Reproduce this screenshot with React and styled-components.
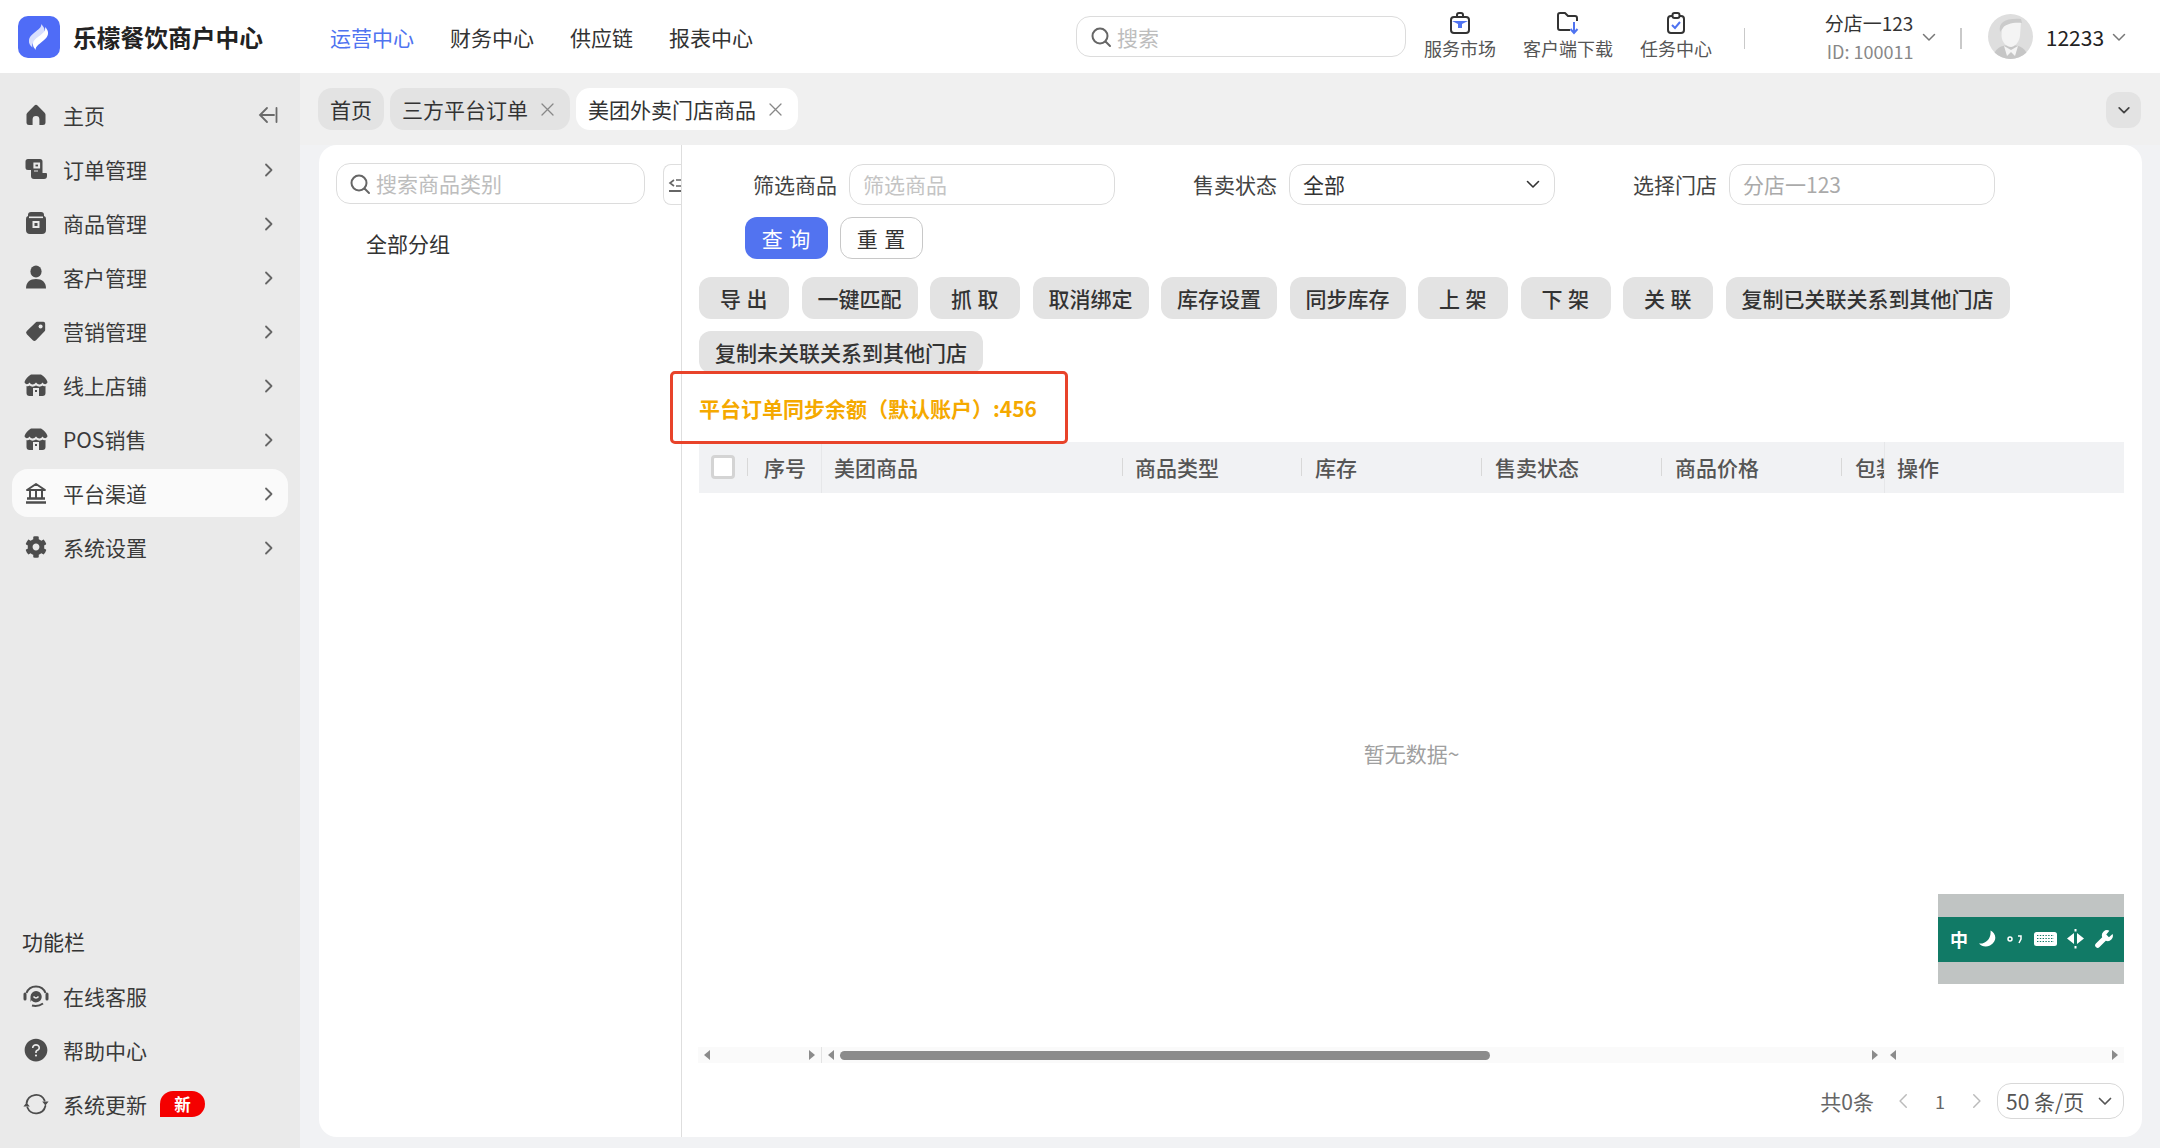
import React from "react";
import styled, { createGlobalStyle } from "styled-components";
import { FaCog } from "react-icons/fa";
import { AiFillQuestionCircle } from "react-icons/ai";

const Global = createGlobalStyle`
  html, body { margin: 0; padding: 0; background: #fff; }
  * { box-sizing: border-box; }
  body { font-family: "Noto Sans CJK SC", "Noto Sans", sans-serif; font-size: 21px; color: #333; }
`;

const Page = styled.div`
  width: 2160px; height: 1148px; overflow: hidden;
  display: grid; grid-template-rows: 73px 1fr; grid-template-columns: 300px 1fr;
`;

const Header = styled.header`
  grid-column: 1 / 3; display: flex; align-items: center; padding-left: 18px; background: #fff;
`;
const Title = styled.div`
  margin-left: 13px; width: 190px; font-size: 23.75px; font-weight: 700; color: #222; white-space: nowrap; line-height: 1;
`;
const Nav = styled.nav`display: flex; gap: 36px; margin-left: 67px;`;
const NavItem = styled.a`font-size: 21px; color: ${p => (p.$active ? "#4f73f0" : "#333")}; white-space: nowrap;`;
const Search = styled.div`
  display: flex; align-items: center; gap: 5px; height: 41px; width: ${p => p.$w}px;
  margin-left: ${p => p.$ml || 0}px; padding: 0 0 ${p => p.$pb || 0}px ${p => p.$pl || 13}px;
  border: 1.4px solid #dcdcdc; border-radius: 14px; background: #fff; color: #bdbdbd; font-size: 21px; flex-shrink: 0;
  svg { margin-top: ${p => p.$pb || 0}px; }
`;
const Tools = styled.div`display: flex; margin-top: -3px;`;
const Tool = styled.div`
  width: 108px; display: flex; flex-direction: column; align-items: center; gap: 2px;
  font-size: 18px; line-height: 22px; color: #555; white-space: nowrap;
`;
const VLine = styled.div`width: 1.4px; height: 21px; background: #c9c9c9; margin-left: ${p => p.$ml}px; margin-top: 3px;`;
const StoreInfo = styled.div`
  margin-left: ${p => p.$ml}px; width: 90px; display: flex; flex-direction: column; align-items: flex-end;
  font-size: 19px; line-height: 26px; color: #333; white-space: nowrap; gap: 2px;
`;
const StoreId = styled.span`font-size: 18px; color: #888;`;
const HeadChevron = styled.div`display: flex; margin-left: ${p => p.$ml}px; color: #777;`;
const Avatar = styled.div`width: 45px; height: 45px; border-radius: 50%; margin-left: 26px; overflow: hidden; flex-shrink: 0;`;
const UserName = styled.span`margin-left: 13px; font-size: 21px; color: #222;`;

const Sidebar = styled.aside`
  background: #eaeaea; display: flex; flex-direction: column; padding: 18px 12px 20px;
`;
const SideGroup = styled.div`display: flex; flex-direction: column; gap: ${p => p.$gap}px;`;
const SideBottom = styled(SideGroup)`margin-top: auto;`;
const SideLabel = styled.div`margin: 0 0 10px 10px; height: 30px; line-height: 30px; font-size: 21px; color: #333;`;
const SideItem = styled.div`
  display: flex; align-items: center; height: 48px; padding: 0 12px; gap: 15px; border-radius: 16px;
  background: ${p => (p.$active ? "#fafafa" : "transparent")}; color: #3a3a3a; font-size: 21px; white-space: nowrap;
`;
const SideIcon = styled.span`
  width: 24px; height: 24px; display: flex; align-items: center; justify-content: center; color: #4d4d4d; flex-shrink: 0;
  svg { flex-shrink: 0; }
`;
const SideEnd = styled.span`
  margin-left: auto; margin-right: ${p => (p.$dock ? -2 : 0)}px; margin-top: ${p => (p.$dock ? 0 : 2)}px; display: flex; color: #666;
`;
const NewBadge = styled.span`
  display: flex; align-items: center; justify-content: center; margin-left: -2px; width: 45px; height: 26px;
  background: #f50000; color: #fff; font-size: 16.5px; font-weight: 700; border-radius: 14px 14px 14px 0;
`;

const Main = styled.main`display: flex; flex-direction: column; background: #f1f2f4; min-height: 0;`;
const TabBar = styled.div`
  height: 72px; background: #f0f0f0; display: flex; gap: 6px; padding: 15px 19px 0 18px; align-items: flex-start;
`;
const Tab = styled.div`
  height: 42px; display: flex; align-items: center; gap: 13px; padding: 0 ${p => (p.$closable ? 16 : 12)}px 0 12px;
  border-radius: 14px; background: ${p => (p.$active ? "#fff" : "#e3e3e3")};
  font-size: 21px; color: #333; white-space: nowrap;
`;
const TabClose = styled.span`display: flex; color: #888;`;
const TabToggle = styled.div`
  margin: 4px 0 0 auto; width: 35px; height: 36px; border-radius: 12px; background: #e3e3e3;
  display: flex; align-items: center; justify-content: center; color: #444;
`;
const PanelWrap = styled.div`flex: 1; min-height: 0; padding: 0 18px 11px 19px; display: flex;`;
const Panel = styled.div`flex: 1; min-width: 0; display: flex; background: #fff; border-radius: 18px; overflow: hidden;`;
const LeftCol = styled.div`
  position: relative; width: 363px; flex-shrink: 0; border-right: 1.4px solid #dedede; padding: 18px 0 0 17px;
`;
const GroupName = styled.div`margin: 24px 0 0 30px; height: 30px; line-height: 30px; font-size: 21px; color: #333;`;
const CollapseTab = styled.div`
  position: absolute; right: 0; top: 19px; width: 18px; height: 41px; background: #fff;
  border: 1.4px solid #dedede; border-right: none; border-radius: 8px 0 0 8px;
  display: flex; align-items: center; justify-content: flex-end; color: #666;
`;
const RightCol = styled.div`flex: 1; min-width: 0; display: flex; flex-direction: column; padding: 19px 18px 0 17px;`;
const FilterRow = styled.div`display: flex; align-items: center; padding-left: 54px; height: 41px;`;
const FilterLabel = styled.label`margin: 0 12px 0 ${p => p.$ml || 0}px; padding-bottom: 2px; color: #444; font-size: 21px; white-space: nowrap;`;
const Field = styled.div`
  width: 266px; flex-shrink: 0; height: 41px; border: 1.4px solid #dcdcdc; border-radius: 14px; padding: 0 13px 2px;
  display: flex; align-items: center; justify-content: space-between;
  color: ${p => p.$color || "#c4c4c4"}; font-size: 21px; white-space: nowrap;
`;
const QueryRow = styled.div`display: flex; gap: 12px; margin: 12px 0 0 46px;`;
const QueryBtn = styled.button`
  width: 83px; height: 42px; border-radius: 12px; font: inherit; cursor: pointer; padding: 0;
  background: ${p => (p.$primary ? "#5273f0" : "#fff")}; color: ${p => (p.$primary ? "#fff" : "#333")};
  border: ${p => (p.$primary ? "none" : "1.4px solid #c8c8c8")}; letter-spacing: 1px;
`;
const ActionRow = styled.div`display: flex; flex-wrap: wrap; gap: 12px 12.5px; margin-top: 18px;`;
const ActionBtn = styled.button`
  height: 42px; padding: 0 16px; min-width: 90px; border: none; border-radius: 12px; background: #e3e3e3;
  font: inherit; font-weight: 500; color: #333; letter-spacing: ${p => (p.$wide ? 0 : "0.5px")}; white-space: nowrap; cursor: pointer;
`;
const Balance = styled.div`
  position: relative; height: 69px; padding-top: 1px; display: flex; align-items: center;
  color: #f5a900; font-size: 21px; font-weight: 600; white-space: nowrap;
`;
const Callout = styled.div`
  position: absolute; left: -29px; top: -2px; width: 398px; height: 73px; border: 3px solid #e8432a; border-radius: 5px;
`;
const TableHead = styled.div`display: flex; height: 51px; background: #f1f2f4; flex-shrink: 0;`;
const HeadCell = styled.div`
  display: flex; align-items: center; width: ${p => p.$w}px; flex-shrink: 0; overflow: hidden;
  border-right: ${p => (p.$edge ? "1px solid #e6e7e9" : "none")}; border-left: ${p => (p.$fixed ? "1px solid #e6e7e9" : "none")};
  font-weight: 500; color: #555; font-size: 21px; white-space: nowrap; padding-bottom: 1px;
`;
const HeadSep = styled.span`width: 1px; height: 18px; background: #d8d8d8; flex-shrink: 0;`;
const HeadLabel = styled.span`margin-left: ${p => p.$ml}px;`;
const Check = styled.span`width: 24px; height: 24px; margin-left: 12px; border: 3px solid #d4d4d4; border-radius: 4px; background: #fff;`;
const TableBody = styled.div`
  flex: 1; min-height: 0; display: flex; align-items: center; justify-content: center; padding-bottom: 34px;
  color: #a0a0a0; font-size: 21px;
`;
const ScrollRow = styled.div`display: flex; height: 16px; background: #fafafa; margin-left: -1px; flex-shrink: 0;`;
const ScrollSeg = styled.div`
  display: flex; align-items: center; width: ${p => p.$w}px; flex-shrink: 0; padding: 0 6px;
  border-right: ${p => (p.$edge ? "1px solid #e3e3e3" : "none")};
`;
const ArrowL = styled.span`width: 0; height: 0; border: 5px solid transparent; border-left-width: 0; border-right: 6px solid #8b8b8b;`;
const ArrowR = styled.span`width: 0; height: 0; margin-left: auto; border: 5px solid transparent; border-right-width: 0; border-left: 6px solid #8b8b8b;`;
const Thumb = styled.span`margin-left: 6px; width: 650px; height: 9px; border-radius: 5px; background: #8b8b8b;`;
const Pager = styled.div`
  height: 74px; padding-top: 20px; display: flex; justify-content: flex-end; align-items: flex-start; flex-shrink: 0;
  color: #666; font-size: 21px;
`;
const PageText = styled.span`line-height: 36px; white-space: nowrap;`;
const PageBtn = styled.span`
  width: 36px; height: 36px; display: flex; align-items: center; justify-content: center; font-size: 18px;
  color: ${p => p.$muted ? "#bbb" : "#666"}; margin-left: ${p => p.$ml || 0}px;
`;
const PageSize = styled.div`
  width: 127px; height: 36px; margin-left: 3px; padding: 0 10px 0 8px; border: 1.4px solid #d8d8d8; border-radius: 14px;
  display: flex; align-items: center; justify-content: space-between; color: #555; white-space: nowrap;
`;
const ImeOverlay = styled.div`
  position: absolute; left: 1938px; top: 894px; width: 186px; height: 90px; background: #c0c4c3;
  display: flex; align-items: center;
`;
const ImeBar = styled.div`
  width: 100%; height: 45px; background: #117a66; color: #fff; display: flex; align-items: center;
  gap: 10.5px; padding-left: 12px; font-size: 18px; font-weight: 700;
  svg { flex-shrink: 0; }
`;

const Chevron = ({ size = 16, dir = "right", w = 1.8 }) => {
  const d = { right: "M6 2.5 L11.5 8 L6 13.5", down: "M2.5 5.5 L8 11 L13.5 5.5", left: "M10 2.5 L4.5 8 L10 13.5" }[dir];
  return <svg width={size} height={size} viewBox="0 0 16 16" fill="none" stroke="currentColor" strokeWidth={w} strokeLinecap="round" strokeLinejoin="round"><path d={d} /></svg>;
};
const Mag = ({ size = 22 }) => (
  <svg width={size} height={size} viewBox="0 0 22 22" fill="none" stroke="#666" strokeWidth="2" strokeLinecap="round"><circle cx="10" cy="10" r="7.5" /><path d="M15.5 15.5 L20 20" /></svg>
);
const CloseX = () => (
  <svg width="13" height="13" viewBox="0 0 13 13" stroke="currentColor" strokeWidth="1.3" strokeLinecap="round"><path d="M1 1 L12 12 M12 1 L1 12" /></svg>
);
const Logo = () => (
  <svg width="42" height="42" viewBox="0 0 42 42" style={{ flexShrink: 0 }}>
    <rect width="42" height="42" rx="10" fill="#4f6cf7" />
    <path d="M23 8 C25 13 12 17 11 24 C10.5 27 12 29.5 14.5 31.5 C12.5 24 25 21.5 26.5 15 C27 12 25 10 23 8Z" fill="#fff" opacity=".78" />
    <path d="M18 34 C16 29 29 25 30 18 C30.5 15 29 13 27 11 C29 18 16 21 15 27 C14.5 30 16 32 18 34Z" fill="#fff" />
  </svg>
);
const BagTool = () => (
  <svg width="24" height="24" viewBox="0 0 24 24" fill="none">
    <rect x="3" y="6" width="18" height="16" rx="3" stroke="#333" strokeWidth="2" />
    <path d="M9 6 V4 a2 2 0 0 1 2-2 h2 a2 2 0 0 1 2 2 V6" stroke="#333" strokeWidth="2" />
    <path d="M4 10 H20 L14 13 V17 H10 V13Z" fill="#4f73f0" />
  </svg>
);
const FolderTool = () => (
  <svg width="24" height="24" viewBox="0 0 24 24" fill="none">
    <path d="M14 19 H4 a2 2 0 0 1-2-2 V4 a2 2 0 0 1 2-2 h5 l3 3 h7 a2 2 0 0 1 2 2 v3" stroke="#333" strokeWidth="2" strokeLinejoin="round" />
    <path d="M18 11 V21 M14.5 18 L18 22 L21.5 18" stroke="#4f73f0" strokeWidth="2" />
  </svg>
);
const ClipTool = () => (
  <svg width="24" height="24" viewBox="0 0 24 24" fill="none">
    <rect x="4" y="5" width="16" height="17" rx="3" stroke="#333" strokeWidth="2" />
    <rect x="8.5" y="2" width="7" height="5" rx="2" fill="#fff" stroke="#333" strokeWidth="2" />
    <path d="M8 14 L11 17 L16 11" stroke="#4f73f0" strokeWidth="2" />
  </svg>
);
const AvatarImg = () => (
  <svg width="45" height="45" viewBox="0 0 45 45">
    <rect width="45" height="45" fill="#dedede" />
    <path d="M5 45 C6 34 13 31 22.5 31 C32 31 39 34 40 45Z" fill="#c6c6c6" />
    <path d="M14 11 C15 6 31 5 33 8 L32 22 C31 29 26 33 23 33 C19 33 14 29 13.5 22Z" fill="#f4f4f4" />
    <path d="M12 18 C10 8 18 4 33 5 L34 9 C26 8 17 10 15 14Z" fill="#cbcbcb" />
    <path d="M16 32 L23 36 L30 32 L27 42 L23 38 L19 42Z" fill="#f4f4f4" />
  </svg>
);

const HomeI = () => <svg width="20" height="22" viewBox="0 0 20 22" fill="currentColor"><path d="M10 .8 C9.4 .8 9 1.1 8.5 1.6 L1.6 8.5 C.7 9.4.5 10 .5 11 V18.5 C.5 20.2 1.6 21 3 21 H6.6 V15.5 A3.4 3.4 0 0 1 13.4 15.5 V21 H17 C18.4 21 19.5 20.2 19.5 18.5 V11 C19.5 10 19.3 9.4 18.4 8.5 L11.5 1.6 C11 1.1 10.6 .8 10 .8Z" /></svg>;
const OrderI = () => <svg width="24" height="24" viewBox="0 0 24 24" fill="currentColor"><path d="M4 2 H16 a2.5 2.5 0 0 1 2.5 2.5 V16 H22 a1 1 0 0 1 1 1 V19 a3 3 0 0 1-3 3 H10 a3 3 0 0 1-3-3 V13 H4 a2.5 2.5 0 0 1-2.5-2.5 V4.5 A2.5 2.5 0 0 1 4 2Z" /><path d="M10 6 H15.5 V11 H10Z M10 14 H14" fill="#eaeaea" stroke="#eaeaea" strokeWidth="1.2" /><path d="M11.5 7.6 H14 V9.4 H11.5Z" /></svg>;
const BagI = () => <svg width="22" height="24" viewBox="0 0 22 24" fill="currentColor"><path d="M6 1 H16 a3 3 0 0 1 3 3 V5 a3 3 0 0 1 2 3 V19 a4 4 0 0 1-4 4 H5 a4 4 0 0 1-4-4 V8 a3 3 0 0 1 2-3 V4 a3 3 0 0 1 3-3Z" /><rect x="4" y="5.5" width="14" height="1.6" fill="#eaeaea" /><rect x="7.5" y="10" width="7" height="7" fill="#eaeaea" /><rect x="9.5" y="12" width="3" height="3" /></svg>;
const PersonI = () => <svg width="22" height="24" viewBox="0 0 22 24" fill="currentColor"><ellipse cx="11" cy="6.5" rx="5.6" ry="6" /><path d="M1 23.5 C1 17 5 14 11 14 C17 14 21 17 21 23.5Z" /></svg>;
const TagI = () => <svg width="22" height="22" viewBox="0 0 24 24" fill="currentColor"><path d="M13 2 H20 a2 2 0 0 1 2 2 V11 a2 2 0 0 1-.6 1.4 L12 22 a2.5 2.5 0 0 1-3.5 0 L2 15.5 a2.5 2.5 0 0 1 0-3.5 L11.6 2.6 A2 2 0 0 1 13 2Z" /><circle cx="17" cy="7" r="2.2" fill="#eaeaea" /></svg>;
const StoreI = () => <svg width="24" height="24" viewBox="0 0 24 24" fill="currentColor"><path d="M7 1.5 H17 C20 3 22.5 6 23.5 9 C23 11.5 20 12 18.5 9.5 C17 12 14 12 12 9.5 C10 12 7 12 5.5 9.5 C4 12 1 11.5 .5 9 C1.5 6 4 3 7 1.5Z" /><path d="M2.5 13 C4 13.5 5 13 5.5 12.5 C7 14 10 14 12 12.5 C14 14 17 14 18.5 12.5 C19 13 20 13.5 21.5 13 V20 a3 3 0 0 1-3 3 H5.5 a3 3 0 0 1-3-3Z" /><rect x="9" y="15" width="6" height="8" fill="#eaeaea" /><rect x="11" y="17" width="2" height="2" /></svg>;
const BankI = () => <svg width="22" height="22" viewBox="0 0 22 22" fill="none" stroke="currentColor" strokeWidth="2"><path d="M2 8 L11 2 L20 8Z" strokeLinejoin="round" /><path d="M5 8 V16 M11 8 V16 M17 8 V16" /><path d="M2 16.5 H20 M1 20.5 H21" strokeWidth="2.4" /></svg>;
const SupportI = () => <svg width="26" height="24" viewBox="0 0 26 24" fill="none" stroke="currentColor" strokeWidth="2"><path d="M3.5 9 A10.2 10.2 0 0 1 22.5 9" /><path d="M2 10 v5 M24 10 v5" strokeWidth="3" strokeLinecap="round" /><path d="M13 7 a5.7 5.7 0 1 1-4.5 9.2 L7.5 18 V12.5 A5.7 5.7 0 0 1 13 7Z" fill="currentColor" stroke="none" /><path d="M10.5 12.5 Q13 15.5 15.5 12.5" stroke="#eaeaea" strokeWidth="1.6" /><path d="M9 21.5 Q15 23 20 19.5" /></svg>;
const SyncI = () => <svg width="26" height="24" viewBox="0 0 26 24" fill="none" stroke="currentColor" strokeWidth="1.8" strokeLinecap="round"><path d="M3.6 11 A9.5 9.5 0 0 1 21.6 8.5" /><path d="M22.4 14 A9.5 9.5 0 0 1 4.4 15.5" /><path d="M19.2 9.5 H25.6 L22.4 13.5Z M.4 14.5 H6.8 L3.6 10.5Z" fill="currentColor" stroke="none" /></svg>;
const DockBack = () => <svg width="20" height="18" viewBox="0 0 20 18" fill="none" stroke="#6a6a6a" strokeWidth="1.8" strokeLinecap="round"><path d="M9 2 L2 9 L9 16 M2 9 H16 M18.5 2 V16" /></svg>;
const OutdentI = () => <svg width="13" height="16" viewBox="0 0 13 16" fill="none" stroke="currentColor" strokeWidth="1.6"><path d="M6 3 L2 6 L6 9 M8 3 H13 M8 9 H13" /><path d="M1 14 H13" strokeWidth="2" /></svg>;
const MoonI = () => <svg width="18" height="18" viewBox="0 0 18 18" fill="#fff"><path d="M11.5 .5 C17 3 19 11 11 15.5 C7 17.5 2.5 16.5 0 13.5 C6 14.5 12.5 9 11.5 .5Z" /></svg>;
const DotComma = () => <svg width="16" height="14" viewBox="0 0 16 14" fill="none" stroke="#fff" strokeWidth="1.5"><circle cx="3" cy="7" r="2" /><path d="M11 4 h3 v3 l-2 4" /></svg>;
const KeyboardI = () => <svg width="23" height="14" viewBox="0 0 23 14" fill="#fff"><rect width="23" height="14" rx="2.5" /><path d="M3 3.5 H20 M3 6.5 H20 M3 9.5 H20" stroke="#117a66" strokeDasharray="1.4 1.4" /></svg>;
const SplitI = () => <svg width="17" height="20" viewBox="0 0 17 20" fill="#fff"><path d="M7 4 V15 L0 9.5Z M10 4 V15 L17 9.5Z" /><rect x="7.5" y="0" width="2" height="2.5" /><rect x="7.5" y="17" width="2" height="2.5" /></svg>;
const WrenchI = () => <svg width="18" height="18" viewBox="0 0 20 20" fill="#fff"><path d="M19.5 4.5 L15.5 8 L12.5 5 L16 .8 A5.8 5.8 0 0 0 8 8 L1 15 A2.8 2.8 0 0 0 5 19 L12 12 A5.8 5.8 0 0 0 19.5 4.5Z" /></svg>;

const mainMenu = [
  ["主页", <HomeI />, "dock"], ["订单管理", <OrderI />], ["商品管理", <BagI />], ["客户管理", <PersonI />],
  ["营销管理", <TagI />], ["线上店铺", <StoreI />], ["POS销售", <StoreI />], ["平台渠道", <BankI />, "active"], ["系统设置", <FaCog size={22} />],
];
const actions = ["导 出", "一键匹配", "抓 取", "取消绑定", "库存设置", "同步库存", "上 架", "下 架", "关 联", "复制已关联关系到其他门店", "复制未关联关系到其他门店"];

export default function App() {
  return (
    <Page>
      <Global />
      <Header>
        <Logo />
        <Title>乐檬餐饮商户中心</Title>
        <Nav>
          <NavItem $active>运营中心</NavItem>
          <NavItem>财务中心</NavItem>
          <NavItem>供应链</NavItem>
          <NavItem>报表中心</NavItem>
        </Nav>
        <Search $w={330} $ml={323}><Mag />搜索</Search>
        <Tools>
          <Tool><BagTool />服务市场</Tool>
          <Tool><FolderTool />客户端下载</Tool>
          <Tool><ClipTool />任务中心</Tool>
        </Tools>
        <VLine $ml={14} />
        <StoreInfo $ml={78}>分店一123<StoreId>ID: 100011</StoreId></StoreInfo>
        <HeadChevron $ml={8}><Chevron size={16} dir="down" w={1.5} /></HeadChevron>
        <VLine $ml={23} />
        <Avatar><AvatarImg /></Avatar>
        <UserName>12233</UserName>
        <HeadChevron $ml={7}><Chevron size={16} dir="down" w={1.5} /></HeadChevron>
      </Header>

      <Sidebar>
        <SideGroup $gap={6}>
          {mainMenu.map(([label, icon, kind]) => (
            <SideItem key={label} $active={kind === "active"}>
              <SideIcon>{icon}</SideIcon>
              {label}
              <SideEnd $dock={kind === "dock"}>{kind === "dock" ? <DockBack /> : <Chevron size={16} />}</SideEnd>
            </SideItem>
          ))}
        </SideGroup>
        <SideBottom $gap={6}>
          <SideLabel>功能栏</SideLabel>
          <SideItem><SideIcon><SupportI /></SideIcon>在线客服</SideItem>
          <SideItem><SideIcon><AiFillQuestionCircle size={26} /></SideIcon>帮助中心</SideItem>
          <SideItem><SideIcon><SyncI /></SideIcon>系统更新<NewBadge>新</NewBadge></SideItem>
        </SideBottom>
      </Sidebar>

      <Main>
        <TabBar>
          <Tab>首页</Tab>
          <Tab $closable>三方平台订单<TabClose><CloseX /></TabClose></Tab>
          <Tab $closable $active>美团外卖门店商品<TabClose><CloseX /></TabClose></Tab>
          <TabToggle><Chevron size={14} dir="down" w={2} /></TabToggle>
        </TabBar>
        <PanelWrap>
          <Panel>
            <LeftCol>
              <Search $w={309} $pl={12} $pb={2}><Mag />搜索商品类别</Search>
              <GroupName>全部分组</GroupName>
              <CollapseTab><OutdentI /></CollapseTab>
            </LeftCol>
            <RightCol>
              <FilterRow>
                <FilterLabel>筛选商品</FilterLabel>
                <Field>筛选商品</Field>
                <FilterLabel $ml={78}>售卖状态</FilterLabel>
                <Field $color="#333">全部<Chevron size={16} dir="down" w={1.6} /></Field>
                <FilterLabel $ml={78}>选择门店</FilterLabel>
                <Field $color="#aaa">分店一123</Field>
              </FilterRow>
              <QueryRow>
                <QueryBtn $primary>查 询</QueryBtn>
                <QueryBtn>重 置</QueryBtn>
              </QueryRow>
              <ActionRow>
                {actions.map(a => <ActionBtn key={a} $wide={a.length > 3}>{a}</ActionBtn>)}
              </ActionRow>
              <Balance>
                平台订单同步余额（默认账户）:456
                <Callout />
              </Balance>
              <TableHead>
                <HeadCell $w={48}><Check /></HeadCell>
                <HeadCell $w={75} $edge><HeadSep /><HeadLabel $ml={16}>序号</HeadLabel></HeadCell>
                <HeadCell $w={300}><HeadLabel $ml={12}>美团商品</HeadLabel></HeadCell>
                <HeadCell $w={179}><HeadSep /><HeadLabel $ml={12}>商品类型</HeadLabel></HeadCell>
                <HeadCell $w={180}><HeadSep /><HeadLabel $ml={13}>库存</HeadLabel></HeadCell>
                <HeadCell $w={180}><HeadSep /><HeadLabel $ml={13}>售卖状态</HeadLabel></HeadCell>
                <HeadCell $w={180}><HeadSep /><HeadLabel $ml={13}>商品价格</HeadLabel></HeadCell>
                <HeadCell $w={43}><HeadSep /><HeadLabel $ml={13}>包装</HeadLabel></HeadCell>
                <HeadCell $w={240} $fixed><HeadLabel $ml={12}>操作</HeadLabel></HeadCell>
              </TableHead>
              <TableBody>暂无数据~</TableBody>
              <ScrollRow>
                <ScrollSeg $w={124} $edge><ArrowL /><ArrowR /></ScrollSeg>
                <ScrollSeg $w={1062}><ArrowL /><Thumb /><ArrowR /></ScrollSeg>
                <ScrollSeg $w={240}><ArrowL /><ArrowR /></ScrollSeg>
              </ScrollRow>
              <Pager>
                <PageText>共0条</PageText>
                <PageBtn $ml={12} $muted><Chevron size={18} dir="left" w={1.3} /></PageBtn>
                <PageBtn>1</PageBtn>
                <PageBtn $muted><Chevron size={18} dir="right" w={1.3} /></PageBtn>
                <PageSize>50 条/页<Chevron size={16} dir="down" w={1.7} /></PageSize>
              </Pager>
            </RightCol>
          </Panel>
        </PanelWrap>
      </Main>

      <ImeOverlay>
        <ImeBar>
          中<MoonI /><DotComma /><KeyboardI /><SplitI /><WrenchI />
        </ImeBar>
      </ImeOverlay>
    </Page>
  );
}
